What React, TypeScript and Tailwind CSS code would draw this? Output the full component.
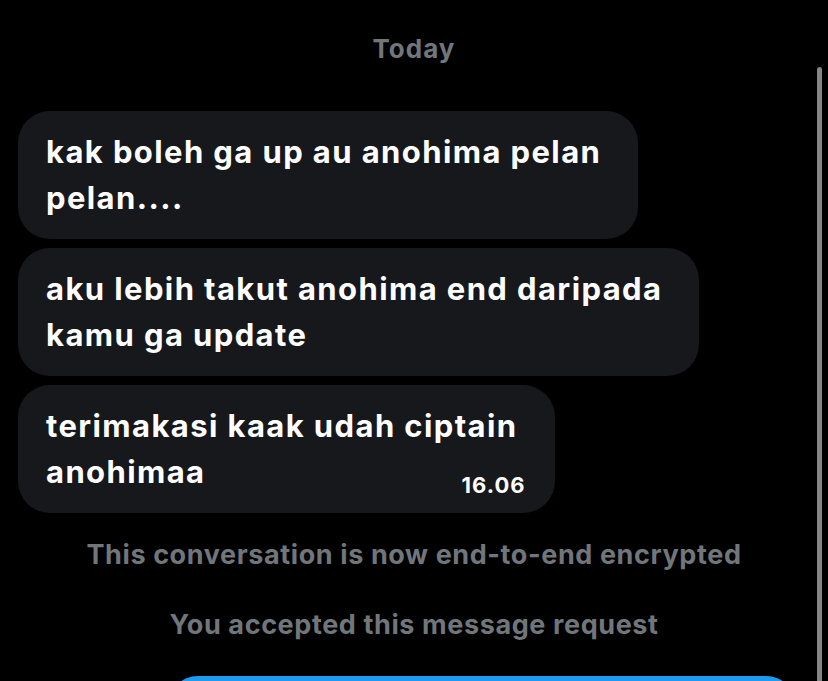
const font = { fontFamily: 'Inter, "Noto Sans", sans-serif' };

function Bubble({ lines, time }: { lines: string[]; time?: string }) {
  return (
    <div className="w-fit rounded-[32px] bg-[#16181c] py-[18px] pl-[28px] pr-[37px] text-[31px] font-bold leading-[46px] tracking-[1.4px] text-white">
      {lines.map((line, i) =>
        time && i === lines.length - 1 ? (
          <div key={i} className="flex items-end justify-between">
            <span>{line}</span>
            <span className="mb-[-5px] mr-[-8px] text-[22px] leading-[30px] tracking-[1px]">{time}</span>
          </div>
        ) : (
          <div key={i}>{line}</div>
        ),
      )}
    </div>
  );
}

export default function App() {
  return (
    <div className="relative h-[681px] w-[828px] overflow-hidden bg-black" style={font}>
      <div className="flex flex-col px-[18px]">
        <div className="pt-[33px] text-center text-[26px] font-bold leading-[32px] tracking-[1px] text-[#71767b]">Today</div>

        <div className="mt-[46px] flex flex-col gap-[9px]">
          <Bubble lines={['kak boleh ga up au anohima pelan', 'pelan....']} />
          <Bubble lines={['aku lebih takut anohima end daripada', 'kamu ga update']} />
          <Bubble lines={['terimakasi kaak udah ciptain', 'anohimaa']} time="16.06" />
        </div>

        <div className="mt-[25px] text-center text-[27px] font-bold leading-[34px] tracking-[0.6px] text-[#71767b]">
          This conversation is now end-to-end encrypted
        </div>
        <div className="mt-[36px] text-center text-[27px] font-bold leading-[34px] tracking-[0.6px] text-[#71767b]">
          You accepted this message request
        </div>

        <div className="ml-[150px] mt-[34px] h-[60px] w-[628px] rounded-full bg-[#1d9bf0]" />
      </div>

      {/* scrollbar */}
      <div className="absolute right-[6px] top-[67px] h-[640px] w-[5px] rounded-full bg-[#858585]" />
    </div>
  );
}
